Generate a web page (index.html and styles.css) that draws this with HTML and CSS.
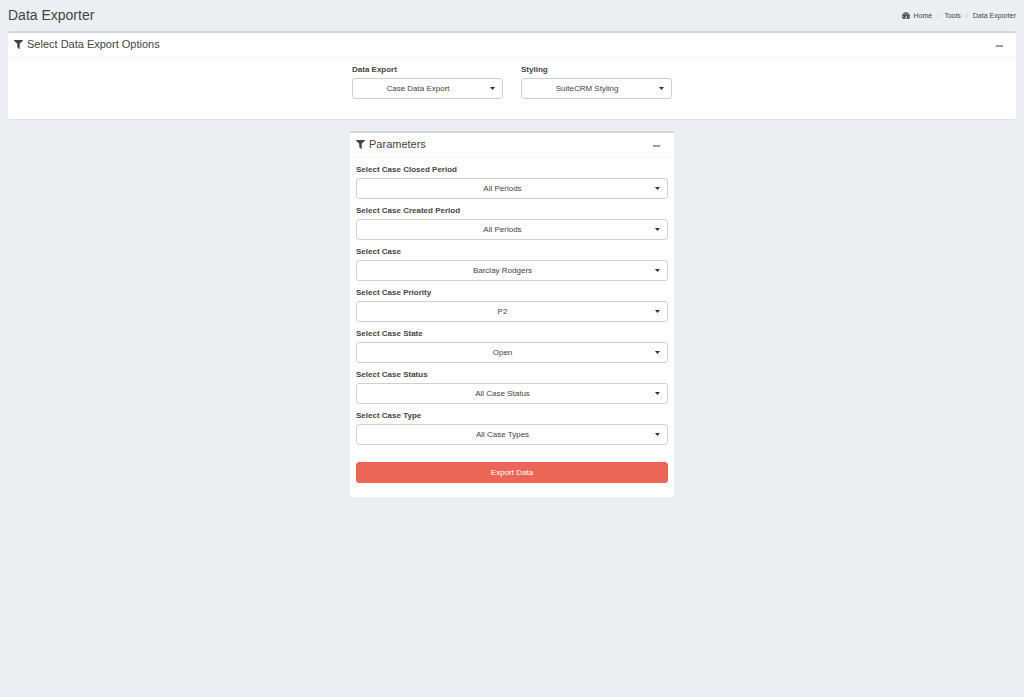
FILE: index.html
```html
<!DOCTYPE html>
<html lang="en">
<head>
<meta charset="utf-8">
<title>Data Exporter</title>
<meta name="viewport" content="width=device-width, initial-scale=1">
<link rel="stylesheet" href="styles.css">
</head>
<body>
<svg class="sprite" aria-hidden="true">
  <symbol id="filter" viewBox="0 0 1408 1408"><path d="M1403 39q17 41-14 70L896 602v742q0 42-39 59-13 5-25 5-27 0-45-19l-256-256q-19-19-19-45V602L19 109Q-12 80 5 39 22 0 64 0h1280q42 0 59 39z"/></symbol>
  <symbol id="gauge" viewBox="0 0 28 24"><path fill-rule="evenodd" d="M14 1A14 14 0 0 0 2.200 22.500Q2.600 23 3.300 23H24.700Q25.400 23 25.800 22.500A14 14 0 0 0 14 1ZM4 13a2 2 0 1 1 0 4 2 2 0 0 1 0-4ZM7 6a2 2 0 1 1 0 4 2 2 0 0 1 0-4ZM14 3a2 2 0 1 1 0 4 2 2 0 0 1 0-4ZM21 6a2 2 0 1 1 0 4 2 2 0 0 1 0-4ZM24 13a2 2 0 1 1 0 4 2 2 0 0 1 0-4ZM15.700 9.300l1.300.400-1.600 6.200a3 3 0 1 1-1.500-.400Z"/></symbol>
</svg>
<header class="page-header">
  <h1 class="page-title">Data Exporter</h1>
  <nav aria-label="Breadcrumb">
    <ol class="breadcrumb">
      <li><a href="#"><svg class="gauge-icon" aria-hidden="true"><use href="#gauge"/></svg>Home</a></li>
      <li><a href="#">Tools</a></li>
      <li><a href="#" aria-current="page">Data Exporter</a></li>
    </ol>
  </nav>
</header>
<main class="content">
  <section class="box">
    <div class="box-header">
      <h2 class="box-title"><svg class="filter-icon" aria-hidden="true"><use href="#filter"/></svg>Select Data Export Options</h2>
      <button class="collapse" type="button" aria-label="Collapse options"></button>
    </div>
    <div class="options">
      <div class="field">
        <label for="export">Data Export</label>
        <div class="picker"><select id="export"><option>Case Data Export</option></select></div>
      </div>
      <div class="field">
        <label for="styling">Styling</label>
        <div class="picker"><select id="styling"><option>SuiteCRM Styling</option></select></div>
      </div>
    </div>
  </section>
  <section class="box parameters">
    <div class="box-header">
      <h2 class="box-title"><svg class="filter-icon" aria-hidden="true"><use href="#filter"/></svg>Parameters</h2>
      <button class="collapse" type="button" aria-label="Collapse parameters"></button>
    </div>
    <form class="parameter-form">
      <div class="field">
        <label for="closed">Select Case Closed Period</label>
        <div class="picker"><select id="closed"><option>All Periods</option></select></div>
      </div>
      <div class="field">
        <label for="created">Select Case Created Period</label>
        <div class="picker"><select id="created"><option>All Periods</option></select></div>
      </div>
      <div class="field">
        <label for="case">Select Case</label>
        <div class="picker"><select id="case"><option>Barclay Rodgers</option></select></div>
      </div>
      <div class="field">
        <label for="priority">Select Case Priority</label>
        <div class="picker"><select id="priority"><option>P2</option></select></div>
      </div>
      <div class="field">
        <label for="state">Select Case State</label>
        <div class="picker"><select id="state"><option>Open</option></select></div>
      </div>
      <div class="field">
        <label for="status">Select Case Status</label>
        <div class="picker"><select id="status"><option>All Case Status</option></select></div>
      </div>
      <div class="field">
        <label for="type">Select Case Type</label>
        <div class="picker"><select id="type"><option>All Case Types</option></select></div>
      </div>
      <button class="export" type="button">Export Data</button>
    </form>
  </section>
</main>
</body>
</html>
```

FILE: styles.css
```css
* {
  box-sizing: border-box;
}

body {
  margin: 0;
  background: #ebeff4;
  color: #444;
  font: 8px/12px "Liberation Sans", Arial, sans-serif;
}

.sprite {
  display: none;
}

.page-header {
  display: flex;
  align-items: center;
  justify-content: space-between;
  padding: 6px 8px;
}

.page-title {
  margin: 0;
  font-size: 14px;
  font-weight: 400;
  line-height: 19px;
}

.breadcrumb {
  display: flex;
  margin: 0;
  padding: 0;
  list-style: none;
  font-size: 7px;
}

.breadcrumb li + li::before {
  content: ">";
  padding: 0 4px;
  color: #ccc;
}

.breadcrumb a {
  color: #444;
  text-decoration: none;
}

.gauge-icon {
  width: 8px;
  height: 7px;
  margin-right: 4px;
  fill: #444;
  vertical-align: -1px;
}

.content {
  padding: 0 8px;
}

.box {
  margin-bottom: 12px;
  background: #fff;
  border-top: 2px solid #d2d6de;
  border-radius: 2px;
  box-shadow: 0 1px 1px rgba(0, 0, 0, 0.06);
}

.parameters {
  width: calc(33.33% - 12px);
  min-width: 240px;
  margin: 0 auto;
}

.box-header {
  display: flex;
  align-items: center;
  justify-content: space-between;
  padding: 5px 6px 7px;
  border-bottom: 1px solid #f4f4f4;
}

.box-title {
  display: flex;
  align-items: center;
  gap: 4px;
  margin: 0;
  font-size: 11px;
  font-weight: 400;
  line-height: 12px;
}

.filter-icon {
  width: 9px;
  height: 9px;
  fill: #444;
}

.collapse {
  display: flex;
  align-items: center;
  justify-content: center;
  width: 22px;
  height: 12px;
  padding: 3px 0 0;
  border: 0;
  background: none;
}

.collapse::before {
  content: "";
  width: 7px;
  height: 2px;
  background: #97a0b3;
}

.options {
  display: grid;
  grid-template-columns: repeat(2, minmax(0, 151px));
  justify-content: center;
  gap: 18px;
  padding: 6px 6px 20px;
}

.parameter-form {
  display: grid;
  gap: 6px;
  padding: 6px 6px 14px;
}

.field {
  display: grid;
  gap: 2px;
}

.field label {
  font-weight: 700;
}

.picker {
  position: relative;
}

.picker::after {
  content: "";
  position: absolute;
  top: 9px;
  right: 8px;
  width: 5px;
  height: 3px;
  background: #333;
  clip-path: polygon(0 0, 100% 0, 50% 100%);
  pointer-events: none;
}

.picker select {
  display: block;
  width: 100%;
  height: 21px;
  margin: 0;
  padding: 0 19px 0 0;
  appearance: none;
  background: #fff;
  border: 1px solid #d0d0d0;
  border-radius: 3px;
  color: #444;
  font: inherit;
  text-align: center;
  text-align-last: center;
}

.export {
  height: 21px;
  margin-top: 11px;
  padding: 0;
  background: #ec6657;
  border: 1px solid #ea6152;
  border-radius: 3px;
  color: #fff;
  font: inherit;
}
```
